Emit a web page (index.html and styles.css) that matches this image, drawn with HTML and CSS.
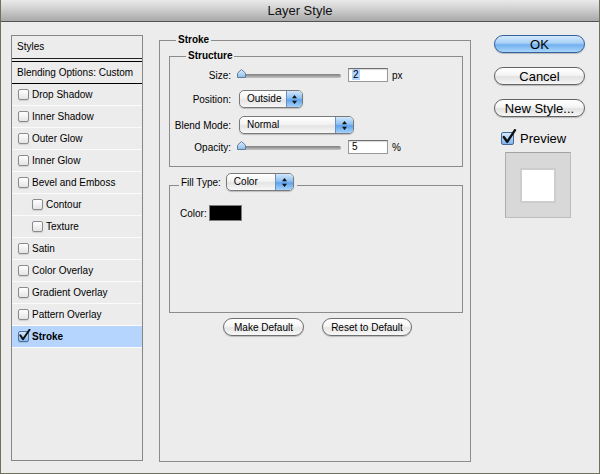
FILE: index.html
```html
<!DOCTYPE html>
<html>
<head>
<meta charset="utf-8">
<title>Layer Style</title>
<link rel="stylesheet" href="styles.css">
</head>
<body>
<div class="window">
  <div class="titlebar">Layer Style</div>
  <div class="content">
    <div class="styles-panel">
      <div class="panel-head">Styles</div>
      <div class="panel-blend">Blending Options: Custom</div>
      <ul class="fx-list">
        <li class="fx"><span class="cb"></span>Drop Shadow</li>
        <li class="fx"><span class="cb"></span>Inner Shadow</li>
        <li class="fx"><span class="cb"></span>Outer Glow</li>
        <li class="fx"><span class="cb"></span>Inner Glow</li>
        <li class="fx"><span class="cb"></span>Bevel and Emboss</li>
        <li class="fx sub"><span class="cb"></span>Contour</li>
        <li class="fx sub"><span class="cb"></span>Texture</li>
        <li class="fx"><span class="cb"></span>Satin</li>
        <li class="fx"><span class="cb"></span>Color Overlay</li>
        <li class="fx"><span class="cb"></span>Gradient Overlay</li>
        <li class="fx"><span class="cb"></span>Pattern Overlay</li>
        <li class="fx active"><span class="cb on"><svg class="check" width="13" height="13" viewBox="0 0 13 13"><path d="M2.3 6.3 L5 10.2 L11.5 0.8" fill="none" stroke="#111" stroke-width="2" stroke-linecap="round" stroke-linejoin="round"/></svg></span>Stroke</li>
      </ul>
    </div>

    <fieldset class="group stroke-group">
      <legend class="bold-legend">Stroke</legend>
      <div class="stroke-body">
        <fieldset class="group structure">
          <legend class="bold-legend">Structure</legend>
          <div class="form-grid">
            <span class="lbl">Size:</span>
            <div class="ctl">
              <div class="slider"><svg class="thumb" width="9" height="9" viewBox="0 0 9 9"><defs><linearGradient id="tg" x1="0" y1="0" x2="0" y2="1"><stop offset="0" stop-color="#e4f0fb"/><stop offset="1" stop-color="#8fbbe6"/></linearGradient></defs><path d="M0.5 4.2 L4.5 0.5 L8.5 4.2 L8.5 8.5 L0.5 8.5 Z" fill="url(#tg)" stroke="#5b7ea6"/></svg></div>
              <span class="field"><span class="sel">2</span></span>
              <span class="unit">px</span>
            </div>

            <span class="lbl">Position:</span>
            <div class="ctl">
              <span class="popup pos"><span class="txt">Outside</span><span class="arr"><svg width="7" height="11" viewBox="0 0 7 11"><path d="M3.5 1 L6 4.3 L1 4.3 Z M3.5 10 L6 6.7 L1 6.7 Z" fill="#111"/></svg></span></span>
            </div>

            <span class="lbl">Blend Mode:</span>
            <div class="ctl">
              <span class="popup blend"><span class="txt">Normal</span><span class="arr"><svg width="7" height="11" viewBox="0 0 7 11"><path d="M3.5 1 L6 4.3 L1 4.3 Z M3.5 10 L6 6.7 L1 6.7 Z" fill="#111"/></svg></span></span>
            </div>

            <span class="lbl">Opacity:</span>
            <div class="ctl">
              <div class="slider"><svg class="thumb" width="9" height="9" viewBox="0 0 9 9"><path d="M0.5 4.2 L4.5 0.5 L8.5 4.2 L8.5 8.5 L0.5 8.5 Z" fill="url(#tg)" stroke="#5b7ea6"/></svg></div>
              <span class="field">5</span>
              <span class="unit">%</span>
            </div>
          </div>
        </fieldset>

        <fieldset class="group fill">
          <legend class="fill-legend"><span>Fill Type:</span><span class="popup filltype"><span class="txt">Color</span><span class="arr"><svg width="7" height="11" viewBox="0 0 7 11"><path d="M3.5 1 L6 4.3 L1 4.3 Z M3.5 10 L6 6.7 L1 6.7 Z" fill="#111"/></svg></span></span></legend>
          <div class="color-row"><span>Color:</span><span class="swatch"></span></div>
        </fieldset>

        <div class="btn-row">
          <button class="sbtn make">Make Default</button>
          <button class="sbtn reset">Reset to Default</button>
        </div>
      </div>
    </fieldset>

    <div class="side">
      <button class="bbtn ok">OK</button>
      <button class="bbtn">Cancel</button>
      <button class="bbtn">New Style...</button>
      <div class="preview-row"><span class="pcb"><svg class="pcheck" width="16" height="16" viewBox="0 0 16 16"><path d="M2.8 8 L6.2 12.8 L14 1.2" fill="none" stroke="#111" stroke-width="2.4" stroke-linecap="round" stroke-linejoin="round"/></svg></span><span>Preview</span></div>
      <div class="preview-box"><div class="preview-sq"></div></div>
    </div>
  </div>
</div>
</body>
</html>
```

FILE: styles.css
```css
html, body {
  margin: 0;
  padding: 0;
}
body {
  background: #ececec;
  font-family: "Liberation Sans", Arial, sans-serif;
  font-size: 10px;
  color: #000;
}
.window {
  width: 600px;
  height: 474px;
  box-sizing: border-box;
  border: 1px solid #6d715d;
  border-top: none;
  background: #ececec;
  overflow: hidden;
}
.titlebar {
  height: 21px;
  border-bottom: 1px solid #525252;
  background: linear-gradient(#e9e9e9, #d2d2d2 40%, #b9b9b9 75%, #a9a9a9);
  text-align: center;
  font-size: 13px;
  line-height: 22px;
  color: #111;
}
.content {
  display: flex;
  align-items: flex-start;
  padding: 12px 0 0 10px;
}

/* left styles panel */
.styles-panel {
  margin-top: 1px;
  width: 132px;
  height: 426px;
  box-sizing: border-box;
  border: 1px solid #868686;
  flex: none;
}
.panel-head {
  height: 22px;
  line-height: 22px;
  padding-left: 5px;
  border-bottom: 1px solid #222;
}
.panel-blend {
  margin-top: 2px;
  height: 21px;
  line-height: 21px;
  padding-left: 5px;
  border-top: 1px solid #000;
  border-bottom: 1px solid #000;
}
.fx-list {
  list-style: none;
  margin: 0;
  padding: 0;
}
.fx {
  height: 21px;
  border-bottom: 1px solid #fbfbfb;
  display: flex;
  align-items: center;
  gap: 3px;
  padding-left: 6px;
}
.fx.sub {
  padding-left: 20px;
}
.fx.active {
  background: #b5d5fe;
  font-weight: bold;
}
.cb {
  position: relative;
  flex: none;
  width: 11px;
  height: 11px;
  box-sizing: border-box;
  border: 1px solid #8b8b8b;
  border-radius: 2px;
  background: linear-gradient(#ffffff, #e4e4e4);
  box-shadow: 0 1px 1px rgba(0, 0, 0, 0.12);
}
.cb.on {
  background: linear-gradient(#d4e8fc, #86b7ec);
  border-color: #4f73a0;
}
.check {
  position: absolute;
  left: -1px;
  top: -3px;
}

/* fieldsets */
.group {
  margin: 0;
  padding: 0;
  border: 1px solid #8c8c8c;
  min-width: 0;
  box-sizing: border-box;
}
.bold-legend {
  margin-left: 16px;
  padding: 0 2px;
  font-weight: bold;
  line-height: 12px;
}
.stroke-group {
  flex: none;
  margin-left: 16px;
  width: 312px;
  height: 428px;
}
.stroke-body {
  padding: 4px 7px 0 9px;
}
.structure {
  height: 117px;
}
.form-grid {
  display: grid;
  grid-template-columns: 61px 1fr;
  grid-template-rows: 22px 26px 26px 18px;
  column-gap: 6px;
  align-items: center;
  padding-top: 2px;
}
.lbl {
  text-align: right;
}
.ctl {
  display: flex;
  align-items: center;
}
.slider {
  position: relative;
  width: 104px;
  height: 4px;
  box-sizing: border-box;
  border-radius: 2px;
  background: linear-gradient(#7e7e7e, #a9a9a9 60%, #c4c4c4);
  margin-top: 1px;
}
.thumb {
  position: absolute;
  left: 0;
  top: -5px;
}
.field {
  margin-left: 7px;
  width: 40px;
  height: 14px;
  box-sizing: border-box;
  border: 1px solid #999;
  border-top-color: #6f6f6f;
  background: #fff;
  box-shadow: inset 0 1px 1px rgba(0, 0, 0, 0.15);
  padding-left: 3px;
  line-height: 12px;
}
.sel {
  background: #b3d4fd;
  padding: 0 1px;
}
.unit {
  margin-left: 4px;
}
.popup {
  display: inline-flex;
  align-items: stretch;
  height: 18px;
  box-sizing: border-box;
  border: 1px solid #7a7a7a;
  border-radius: 5px;
  background: linear-gradient(#ffffff, #f3f3f3 45%, #e4e4e4 55%, #f7f7f7);
  box-shadow: 0 1px 1px rgba(0, 0, 0, 0.2);
  overflow: hidden;
}
.popup .txt {
  flex: 1;
  padding-left: 7px;
  line-height: 16px;
}
.popup .arr {
  width: 15px;
  flex: none;
  border-left: 1px solid #6d8fbd;
  background: linear-gradient(#d2e7fb, #8ec0f1 45%, #5ea3eb 55%, #a8d2f8);
  display: flex;
  align-items: center;
  justify-content: center;
}
.pos {
  margin-left: 2px;
  width: 64px;
}
.blend {
  margin-left: 2px;
  width: 115px;
}
.blend .arr {
  width: 17px;
}
.fill {
  margin-top: 6px;
  height: 140px;
}
.fill-legend {
  margin-left: 9px;
  padding: 0 3px 7px 2px;
  display: flex;
  align-items: center;
  gap: 5px;
}
.filltype {
  width: 68px;
}
.filltype .arr {
  width: 17px;
}
.color-row {
  display: flex;
  align-items: center;
  gap: 2px;
  padding: 7px 0 0 10px;
}
.swatch {
  width: 33px;
  height: 16px;
  box-sizing: border-box;
  border: 1px solid #7d7d7d;
  background: #000;
}
.btn-row {
  display: flex;
  gap: 18px;
  margin: 5px 0 0 54px;
}
.sbtn {
  height: 18px;
  box-sizing: border-box;
  padding: 0;
  border: 1px solid #6f6f6f;
  border-radius: 9px;
  background: linear-gradient(#ffffff, #f6f6f6 45%, #e6e6e6 55%, #f8f8f8);
  box-shadow: 0 1px 1px rgba(0, 0, 0, 0.2);
  font-family: "Liberation Sans", Arial, sans-serif;
  font-size: 10px;
  color: #000;
}
.make {
  width: 81px;
}
.reset {
  width: 90px;
}

/* right column */
.side {
  flex: none;
  margin: 1px 0 0 23px;
  width: 91px;
  display: flex;
  flex-direction: column;
}
.bbtn {
  height: 18px;
  box-sizing: border-box;
  padding: 0;
  margin-bottom: 14px;
  border: 1px solid #646464;
  border-radius: 9px;
  background: linear-gradient(#ffffff, #f4f4f4 45%, #e2e2e2 55%, #f6f6f6);
  box-shadow: 0 1px 1px rgba(0, 0, 0, 0.22);
  font-family: "Liberation Sans", Arial, sans-serif;
  font-size: 13px;
  line-height: 15px;
  color: #000;
}
.bbtn.ok {
  border-color: #33619c;
  background: linear-gradient(#d5eafd, #a6cff6 45%, #72b0ef 55%, #a9d6fb);
}
.preview-row {
  display: flex;
  align-items: center;
  gap: 6px;
  height: 16px;
  margin-top: -1px;
  padding-left: 7px;
  font-size: 13px;
}
.pcb {
  position: relative;
  width: 13px;
  height: 13px;
  box-sizing: border-box;
  border: 1px solid #47699a;
  border-radius: 2px;
  background: linear-gradient(#d7eafd, #7fb3ec);
  flex: none;
}
.pcheck {
  position: absolute;
  left: -1px;
  top: -4px;
}
.preview-box {
  margin: 6px 0 0 11px;
  width: 66px;
  height: 66px;
  box-sizing: border-box;
  background: #d8d8d8;
  border: 1px solid #bdbdbd;
  border-top-color: #a3a3a3;
  border-left-color: #adadad;
  display: flex;
  align-items: center;
  justify-content: center;
}
.preview-sq {
  width: 32px;
  height: 31px;
  background: #fff;
  border: 2px solid #cdcdcd;
}
```
